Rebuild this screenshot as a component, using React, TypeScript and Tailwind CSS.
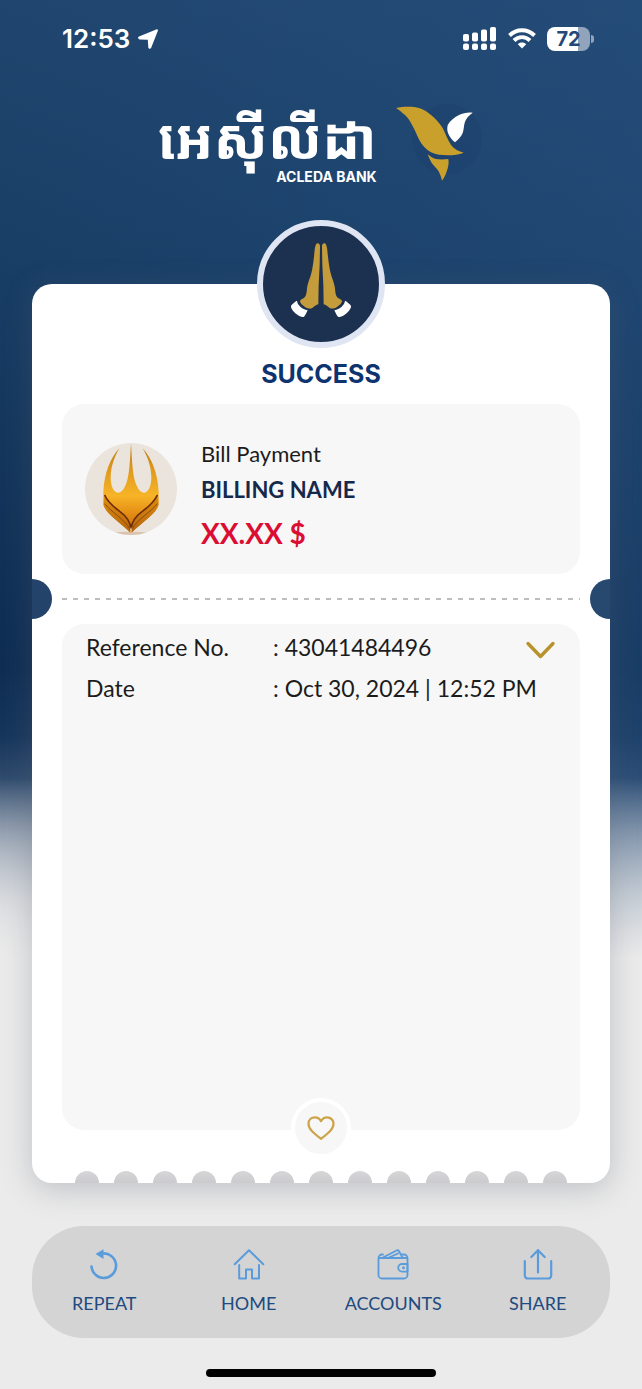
import React from "react";

function StatusBar() {
  return (
    <header className="flex items-center justify-between pt-[23px] pr-12 pl-[62px] text-white">
      <div className="flex items-center gap-2">
        <span className="font-[Inter,sans-serif] text-[26px] leading-8 font-semibold">12:53</span>
        <svg className="h-5 w-5" viewBox="0 0 20 20" fill="currentColor" aria-hidden="true">
          <path d="M19.400.5c.6.3.7.9.4 1.600l-6.600 16.600c-.7 1.600-2.900 1.200-2.900-.5L9.800 10.800 1.900 10.400C-.1 10.300-.5 8.100 1 7.400L18.200.4c.5-.2.900-.1 1.200.1Z" />
        </svg>
      </div>
      <div className="flex items-center gap-[11px]">
        <svg className="h-7 w-[34px]" viewBox="0 0 34 28" fill="currentColor" aria-hidden="true">
          <rect x="0" y="9" width="6" height="7.500" rx="1.800" />
          <rect x="9" y="7.500" width="6" height="9" rx="1.800" />
          <rect x="18" y="4.500" width="6" height="12" rx="1.800" />
          <rect x="27" y="2" width="6" height="14.500" rx="1.800" />
          <rect x="0" y="18.500" width="6" height="6.500" rx="2" />
          <rect x="9" y="18.500" width="6" height="6.500" rx="2" />
          <rect x="18" y="18.500" width="6" height="6.500" rx="2" />
          <rect x="27" y="18.500" width="6" height="6.500" rx="2" />
        </svg>
        <svg className="h-6 w-7" viewBox="0 0 28 24" fill="none" stroke="currentColor" strokeWidth="3.900" aria-hidden="true">
          <path d="M1.500 8.500c7-7 18-7 25 0" />
          <path d="M6 13.500c4.500-4.500 11.500-4.500 16 0" />
          <path d="M14 15.500c1.800 0 3.200.7 4.200 1.700L14 21.600l-4.200-4.400c1-1 2.400-1.700 4.200-1.700Z" fill="currentColor" stroke="none" />
        </svg>
        <div className="flex items-center gap-px">
          <span className="flex h-6 w-[43px] items-center justify-center rounded-lg bg-linear-to-r from-white from-72% to-[#92a4bb] to-72% font-[Inter,sans-serif] text-[20px] font-bold text-[#25487a]">
            72
          </span>
          <span className="h-2 w-[3px] rounded-r-full bg-[#92a4bb]" />
        </div>
      </div>
    </header>
  );
}

function Brand() {
  return (
    <div className="flex items-end justify-center gap-3 pt-[42px]">
      <div className="flex flex-col items-end text-white">
        <span
          lang="km"
          className="font-['Noto_Sans_Khmer','Noto_Sans',sans-serif] text-[56px] leading-[64px] font-bold whitespace-nowrap"
        >
          អេស៊ីលីដា
        </span>
        <span className="font-[Inter,sans-serif] text-sm leading-4 font-bold">ACLEDA BANK</span>
      </div>
      <svg className="h-[88px] w-24" viewBox="388 97 96 88" aria-hidden="true">
        <circle cx="446" cy="139" r="35" fill="#1c3d6b" opacity=".3" />
        <path
          fill="#c9a02c"
          d="M395 108c6-1.500 13-1.500 18-1 7 1 12 3.500 17 8 5 4 8.500 8 11.700 13 3 6 5 12 8.300 17 3 4 8 6.500 12.700 7.700-5 1.800-10 2.600-16 2.600-6.500 0-11.500-.6-16.700-3-5-2.800-9-7-11.700-12.300-3-6-5-11.500-8.300-17-2.500-4.500-5-7.500-8.300-9.700-2-2-4-3.800-6.700-5.300Z"
        />
        <path fill="#c9a02c" d="M426.700 154.300c2.600 2.200 5.300 3.900 8.300 4.700 4 .6 8 .5 12.300 0 .6 3.200.3 6.300-.6 9.300-1.300 4.700-3 9-5.700 12.400-.8-4-2.300-7.700-4.300-10.700-2-3-5-5.300-6.700-8.300-1.200-2.200-2.200-4.700-3.300-7.400Z" />
        <path fill="#fff" d="M471.700 112.700c-5-.7-9.400.3-13.700 2.300-5 2.600-9 6-11.300 10-.6 3-.6 5.500.3 8 1.500 4 4 7 7 9.300 3.300-2.600 6-5.600 7.700-9.300 1.300-3.700 1-7.500 2.300-11.300 1.300-3.700 4.200-6.500 7.700-9Z" />
      </svg>
    </div>
  );
}

function PrayingHands() {
  return (
    <svg className="h-[76px] w-[62px]" viewBox="150 110 186 228" aria-hidden="true">
      <g id="hand">
        <path
          fill="#c59c3b"
          d="M233 114c5 0 7 4 7 10l-1 55-3 60-1 58c-7 2-12 6-18 11-6 3-14 2-22-3-8-5-14-11-15-17 0-5 6-6 12-10 8-7 8-18 9-29 3-20 10-32 13-45 4-17 6-33 8-50 2-14 2-40 11-40Z"
        />
        <path fill="#fff" d="M171 286c1 13 15 25 32 29-3 6-6 14-11 19-5 3-12 0-22-7-11-9-18-19-17-25 3-6 11-12 18-16Z" />
      </g>
      <use href="#hand" transform="translate(486 0) scale(-1 1)" />
    </svg>
  );
}

function MerchantLogo() {
  return (
    <svg className="size-[92px] shrink-0" viewBox="45 54 276 276" role="img" aria-label="Merchant logo">
      <defs>
        <linearGradient id="gold" x1="0" y1="0" x2="0" y2="1">
          <stop offset="0" stopColor="#b87a1c" />
          <stop offset=".3" stopColor="#e09a1c" />
          <stop offset=".58" stopColor="#f7b427" />
          <stop offset=".8" stopColor="#e28a12" />
          <stop offset="1" stopColor="#b9650c" />
        </linearGradient>
        <linearGradient id="side" x1="0" y1="0" x2="0" y2="1">
          <stop offset="0" stopColor="#e0900f" />
          <stop offset="1" stopColor="#b5640d" />
        </linearGradient>
        <clipPath id="disc">
          <circle cx="183" cy="192" r="138" />
        </clipPath>
      </defs>
      <g clipPath="url(#disc)">
        <rect x="45" y="54" width="276" height="276" fill="#ebe4dd" />
        <ellipse cx="183" cy="334" rx="90" ry="14" fill="#d9c4ad" />
        <path
          fill="url(#gold)"
          d="M183 55C186 110 188 148 196 172C203 193 213 205 224 203C238 198 244 180 244 155C243 125 234 98 218 70C246 100 263 145 266 200V240C258 268 215 290 183 325C151 290 108 268 100 240V200C103 145 120 100 148 70C132 98 123 125 122 155C122 180 128 198 142 203C153 205 163 193 170 172C178 148 180 110 183 55Z"
        />
        <path fill="url(#side)" d="M102 205C112 232 130 244 148 257C170 272 181 292 183 325C151 292 108 268 101 240ZM264 205C254 232 236 244 218 257C196 272 185 292 183 325C215 292 258 268 265 240Z" />
        <path fill="none" stroke="#6d2c0c" strokeWidth="5" d="M104 210C114 234 132 246 149 259C170 274 181 288 183 312C185 288 196 274 217 259C234 246 252 234 262 210" />
        <path fill="none" stroke="#8f4a10" strokeWidth="3" d="M104 236C126 264 162 280 181 314M262 236C240 264 204 280 185 314" />
        <path stroke="#fff0c8" strokeWidth="3" d="M183 308v18" />
      </g>
    </svg>
  );
}

function RepeatIcon() {
  return (
    <svg className="size-8" viewBox="0 0 32 32" fill="none" aria-hidden="true">
      <path d="M3.500 17.500a12.300 12.300 0 1 0 10.500-13" stroke="currentColor" strokeWidth="2.600" strokeLinecap="round" />
      <path d="M7.500 5 15.500.3V10Z" fill="currentColor" />
    </svg>
  );
}

function HomeIcon() {
  return (
    <svg className="size-8" viewBox="0 0 32 32" fill="none" stroke="currentColor" strokeWidth="2" strokeLinejoin="round" strokeLinecap="round" aria-hidden="true">
      <path d="M1.700 15.300 16 1.200l14.300 14.100" />
      <path d="M6.200 16v13.500H13v-9h6v9h7V16" />
    </svg>
  );
}

function WalletIcon() {
  return (
    <svg className="size-8" viewBox="0 0 32 32" fill="none" stroke="currentColor" strokeWidth="1.800" strokeLinejoin="round" strokeLinecap="round" aria-hidden="true">
      <path d="M6 5.500H5A3.500 3.500 0 0 0 1.500 9v17A3.500 3.500 0 0 0 5 29.500h22a3.500 3.500 0 0 0 3.500-3.500V9A3.500 3.500 0 0 0 27 5.500h-2" />
      <path d="M2.500 9h27M6 8.500 19.500 1.500c1-.5 2-.2 2.500.7L25.500 8.500M12 8.500l9-4" />
      <path d="M30.500 15H25a3.800 3.800 0 0 0 0 7.600h5.500Z" />
      <circle cx="26.500" cy="18.800" r=".6" fill="currentColor" />
    </svg>
  );
}

function ShareIcon() {
  return (
    <svg className="size-8" viewBox="0 0 32 32" fill="none" stroke="currentColor" strokeWidth="2.200" strokeLinejoin="round" strokeLinecap="round" aria-hidden="true">
      <path d="M16 23.500V1.200M9.300 8 16 1.200 22.700 8" />
      <path d="M2.800 12v14.500a3 3 0 0 0 3 3h20.400a3 3 0 0 0 3-3V12" />
    </svg>
  );
}

const actions = [
  { label: "REPEAT", Icon: RepeatIcon },
  { label: "HOME", Icon: HomeIcon },
  { label: "ACCOUNTS", Icon: WalletIcon },
  { label: "SHARE", Icon: ShareIcon },
];

function Details() {
  return (
    <section className="relative mx-[30px] h-[506px] rounded-[22px] bg-[#f7f7f7] px-6 pt-[3px] text-[23px] leading-[41px] text-[#1c1c1c]">
      <dl className="grid grid-cols-[187px_1fr]">
        <dt>Reference No.</dt>
        <dd className="flex items-center justify-between">
          <span>: 43041484496</span>
          <button type="button" aria-label="Show more details" className="pt-1 text-[#b8922a]">
            <svg className="h-5 w-8" viewBox="0 0 32 20" fill="none" stroke="currentColor" strokeWidth="3.400" strokeLinecap="round" strokeLinejoin="round" aria-hidden="true">
              <path d="M4 3.500 16.500 16.500 29 3.500" />
            </svg>
          </button>
        </dd>
        <dt>Date</dt>
        <dd className="whitespace-nowrap">: Oct 30, 2024 | 12:52 PM</dd>
      </dl>
      <button
        type="button"
        aria-label="Add to favourites"
        className="absolute -bottom-7 left-1/2 flex size-[60px] -translate-x-1/2 items-center justify-center rounded-full border-4 border-white bg-[#f7f7f7] text-[#cda34a]"
      >
        <svg className="h-6 w-7" viewBox="0 0 28 24" fill="none" stroke="currentColor" strokeWidth="2.200" strokeLinejoin="round" aria-hidden="true">
          <path d="M14 5.200C12.500 2.500 10.400 1.300 8 1.300 4.300 1.300 1.500 4 1.500 7.800c0 5.600 5.500 9.700 12.500 15 7-5.300 12.500-9.400 12.500-15 0-3.800-2.800-6.500-6.500-6.500-2.400 0-4.500 1.200-6 3.900Z" />
        </svg>
      </button>
    </section>
  );
}

export default function App() {
  return (
    <div className="min-h-screen bg-[linear-gradient(180deg,#ebebeb00_56%,#ebebeb_69%),linear-gradient(90deg,#0f305600,#2a558566),linear-gradient(180deg,#20466f_0%,#1a4068_15%,#14365c_33%,#0f2d53_48%,#17365c_53%,#2f4b6d_56%,#72839a_60%,#b4bcc5_65%,#dcdde0_70%,#ebebeb_76%)] font-[Lato,'Open_Sans',sans-serif]">
      <StatusBar />
      <Brand />
      <main className="mx-8 mt-[99px] rounded-[20px] bg-white shadow-[0_6px_30px_rgba(90,96,108,0.3)]">
        <div className="flex flex-col items-center">
          <div className="-mt-16 flex size-32 items-center justify-center rounded-full border-[6px] border-[#dfe5f2] bg-[#1c3150] pb-2">
            <PrayingHands />
          </div>
          <h1 className="mt-2 font-[Inter,sans-serif] text-[25px] leading-9 font-bold text-[#0d3470]">SUCCESS</h1>
        </div>

        <section className="mx-[30px] mt-3 flex h-[170px] items-center gap-6 rounded-[22px] bg-[#f7f7f7] px-[23px]">
          <MerchantLogo />
          <div className="pt-4 text-[22px] leading-9">
            <p className="text-[#1c1c1c]">Bill Payment</p>
            <p className="font-bold text-[#15294b]">BILLING NAME</p>
            <p className="text-[28px] leading-[50px] font-bold text-[#db0d33]">XX.XX $</p>
          </div>
        </section>

        <div className="my-[5px] flex items-center justify-between">
          <span className="h-10 w-5 rounded-r-full bg-[#24436a]" />
          <span className="mx-[10px] h-[2px] flex-1 bg-[repeating-linear-gradient(90deg,#bdbdbd_0_5px,transparent_5px_11px)]" />
          <span className="h-10 w-5 rounded-l-full bg-[#27486f]" />
        </div>

        <Details />

        <div className="mx-[43px] mt-[41px] flex justify-between">
          {Array.from({ length: 13 }, (_, i) => (
            <span key={i} className="h-3 w-6 rounded-t-full bg-linear-to-b from-[#d6d6d8] to-[#cbcbce]" />
          ))}
        </div>
      </main>

      <nav className="mx-8 mt-[43px] grid h-28 grid-cols-4 rounded-[52px] bg-[#d4d4d4]">
        {actions.map(({ label, Icon }) => (
          <button key={label} type="button" className="flex flex-col items-center pt-[23px] text-[#5a9bdc]">
            <Icon />
            <span className="mt-2 text-lg leading-7 text-[#214a80]">{label}</span>
          </button>
        ))}
      </nav>
      <div className="pt-[31px] pb-3">
        <div className="mx-auto h-2 w-[230px] rounded-full bg-black" />
      </div>
    </div>
  );
}
